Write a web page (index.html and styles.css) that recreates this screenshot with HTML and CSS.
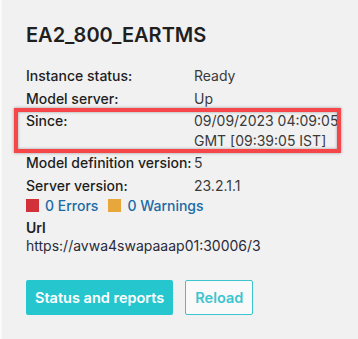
FILE: index.html
```html
<!DOCTYPE html>
<html lang="en">
<head>
  <meta charset="UTF-8">
  <title>EA2_800_EARTMS</title>
  <link rel="stylesheet" href="styles.css">
</head>
<body>
  <div class="card">
    <h1 class="card-title">EA2_800_EARTMS</h1>

    <div class="info">
      <div class="info-row">
        <span class="info-label">Instance status:</span>
        <span class="info-value">Ready</span>
      </div>
      <div class="info-row">
        <span class="info-label">Model server:</span>
        <span class="info-value">Up</span>
      </div>
      <div class="info-row highlight">
        <span class="info-label">Since:</span>
        <span class="info-value">09/09/2023 04:09:05 GMT [09:39:05 IST]</span>
      </div>
      <div class="info-row">
        <span class="info-label">Model definition version:</span>
        <span class="info-value">5</span>
      </div>
      <div class="info-row">
        <span class="info-label">Server version:</span>
        <span class="info-value">23.2.1.1</span>
      </div>
    </div>

    <div class="issues">
      <a class="issue" href="#"><span class="swatch swatch-error"></span>0 Errors</a>
      <a class="issue" href="#"><span class="swatch swatch-warning"></span>0 Warnings</a>
    </div>

    <div class="url-block">
      <div class="url-label">Url</div>
      <div class="url-value">https://avwa4swapaaap01:30006/3</div>
    </div>

    <div class="actions">
      <button class="btn btn-primary">Status and reports</button>
      <button class="btn btn-outline">Reload</button>
    </div>
  </div>
</body>
</html>
```

FILE: styles.css
```css
body {
  margin: 0;
  padding: 0 0 0 2px;
  background-color: #fafafa;
  font-family: Inter, "Noto Sans", sans-serif;
  color: #222;
}
.card {
  background-color: #f1f1f1;
  min-height: 339px;
  box-sizing: border-box;
  padding: 22px 18px 0 24px;
}
.card-title {
  margin: 0 0 18px 0;
  font-size: 20px;
  font-weight: 600;
  line-height: 26px;
  color: #1f1f1f;
}
.info {
  display: flex;
  flex-direction: column;
  gap: 3px;
}
.info-row {
  display: grid;
  grid-template-columns: 168px 1fr;
  font-size: 14px;
  line-height: 19.5px;
}
.info-label {
  font-weight: 500;
  color: #1e1e1e;
}
.info-value {
  color: #3a3a3a;
}
.highlight {
  position: relative;
}
.highlight::after {
  content: "";
  position: absolute;
  top: -3px;
  left: -12px;
  right: -1px;
  bottom: -3px;
  border: 4px solid #f5474a;
  box-shadow: 0 0 3px rgba(0, 0, 0, 0.35), inset 0 0 3px rgba(0, 0, 0, 0.35);
}
.issues {
  display: flex;
  gap: 10px;
  margin-top: 1px;
  font-size: 14px;
  line-height: 19.5px;
}
.issue {
  display: flex;
  align-items: center;
  gap: 6px;
  color: #1b6aa5;
  text-decoration: none;
  font-weight: 500;
}
.swatch {
  width: 13px;
  height: 13px;
  display: inline-block;
}
.swatch-error {
  background-color: #d3313a;
}
.swatch-warning {
  background-color: #e8a73a;
}
.url-block {
  margin-top: 3px;
  font-size: 14px;
  line-height: 18px;
}
.url-label {
  font-weight: 600;
  color: #222;
}
.url-value {
  color: #2a2a3a;
}
.actions {
  display: flex;
  gap: 12px;
  margin-top: 25px;
}
.btn {
  font-family: Inter, "Noto Sans", sans-serif;
  font-size: 14.5px;
  font-weight: 600;
  height: 35px;
  padding: 0 9px;
  border-radius: 2px;
  cursor: pointer;
}
.btn-primary {
  background-color: #26c6cf;
  color: white;
  border: none;
}
.btn-outline {
  background-color: #f9f9f9;
  color: #3cc4cf;
  border: 1px solid #3cc4cf;
}
```
